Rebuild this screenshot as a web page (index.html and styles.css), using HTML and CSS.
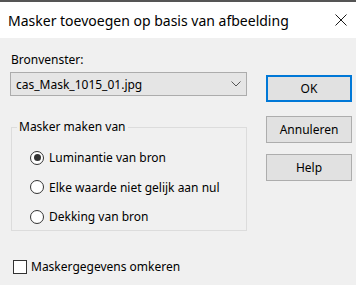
FILE: index.html
```html
<!DOCTYPE html>
<html lang="nl">

<head>
    <meta charset="UTF-8">
    <meta name="viewport" content="width=device-width, initial-scale=1.0">
    <title>Masker toevoegen op basis van afbeelding</title>
    <link rel="stylesheet" href="styles.css">
</head>

<body>
    <!-- titelbalk -->
    <div class="titlebar">
        <span class="title">Masker toevoegen op basis van afbeelding</span>
        <svg class="close" width="12" height="12" viewBox="0 0 12 12">
            <path d="M0.5 0.5 L11.5 11.5 M11.5 0.5 L0.5 11.5" stroke="#1a1a1a" stroke-width="1" fill="none" />
        </svg>
    </div>

    <div class="dialog">
        <div class="left">
            <div class="label">Bronvenster:</div>
            <div class="combo">
                <span>cas_Mask_1015_01.jpg</span>
                <svg width="10" height="6" viewBox="0 0 10 6">
                    <path d="M0.5 0.5 L5 5 L9.5 0.5" stroke="#555" stroke-width="1" fill="none" />
                </svg>
            </div>

            <fieldset class="group">
                <legend>Masker maken van</legend>
                <div class="radio"><span class="dot checked"></span>Luminantie van bron</div>
                <div class="radio"><span class="dot"></span>Elke waarde niet gelijk aan nul</div>
                <div class="radio"><span class="dot"></span>Dekking van bron</div>
            </fieldset>

            <div class="check"><span class="box"></span>Maskergegevens omkeren</div>
        </div>

        <div class="buttons">
            <button class="btn default">OK</button>
            <button class="btn">Annuleren</button>
            <button class="btn">Help</button>
        </div>
    </div>
</body>

</html>
```

FILE: styles.css
```css
/* Basis */
body {
    margin: 0;
    width: 356px;
    height: 285px;
    font-family: "Noto Sans", "Open Sans", sans-serif;
    font-size: 12px;
    color: #000;
    background: #f0f0f0;
    overflow: hidden;
}

/* Titelbalk */
.titlebar {
    height: 36px;
    border-top: 2px solid #555;
    background: #fff;
    display: flex;
    align-items: center;
    justify-content: space-between;
    padding: 0 9px 0 8px;
}

.title {
    font-size: 14px;
    color: #000;
    margin-top: 1px;
}

/* Dialooginhoud */
.dialog {
    display: flex;
    padding: 14px 0 0 10px;
}

.left {
    width: 237px;
}

.label {
    line-height: 16px;
    margin-left: 1px;
}

.combo {
    margin-top: 4px;
    height: 22px;
    border: 1px solid #acacac;
    background: #e5e5e5;
    display: flex;
    align-items: center;
    justify-content: space-between;
    padding: 0 5px 0 5px;
}

/* Groepsvak */
.group {
    margin: 23px 0 0 1px;
    padding: 8px 0 8px 0;
    border: 1px solid #dcdcdc;
    box-sizing: border-box;
    height: 112px;
}

.group legend {
    padding: 0 2px;
    margin-left: 5px;
    line-height: 16px;
}

.radio {
    display: flex;
    align-items: center;
    height: 29.5px;
    padding-left: 18px;
}

.dot {
    width: 12px;
    height: 12px;
    border: 1px solid #333;
    border-radius: 50%;
    background: #fff;
    margin-right: 5px;
    position: relative;
    flex-shrink: 0;
}

.dot.checked::after {
    content: "";
    position: absolute;
    left: 2.5px;
    top: 2.5px;
    width: 7px;
    height: 7px;
    border-radius: 50%;
    background: #333;
}

/* Selectievakje */
.check {
    display: flex;
    align-items: center;
    margin: 27px 0 0 3px;
}

.box {
    width: 12px;
    height: 12px;
    border: 1px solid #333;
    background: #fff;
    margin-right: 4px;
}

/* Knoppen */
.buttons {
    display: flex;
    flex-direction: column;
    margin-left: 19px;
    padding-top: 23px;
}

.btn {
    width: 86px;
    height: 27px;
    margin-bottom: 11px;
    font-family: inherit;
    font-size: 12px;
    color: #000;
    background: #e1e1e1;
    border: 1px solid #adadad;
    padding: 0;
}

.btn.default {
    border: 2px solid #0078d7;
    margin-bottom: 14px;
}
```
